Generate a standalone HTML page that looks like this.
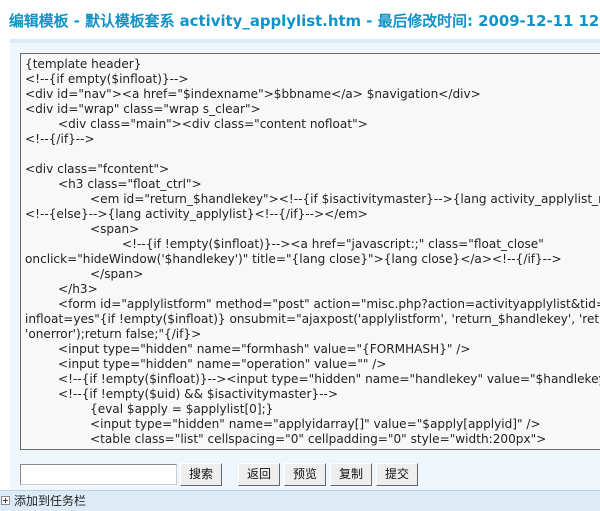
<!DOCTYPE html><html><head><meta charset="utf-8"><style>
*{margin:0;padding:0;box-sizing:border-box}
body{width:600px;height:511px;overflow:hidden;background:#fff;font-family:"DejaVu Sans","WenQuanYi Zen Hei",sans-serif;position:relative}
h1{position:absolute;left:9px;top:10px;font-size:14.9px;font-weight:bold;color:#1293c8;white-space:nowrap;font-family:"DejaVu Sans","WenQuanYi Zen Hei",sans-serif}
.panel{position:absolute;left:10px;top:39px;width:600px;height:452px;background:#eff7fc;border-top:4px solid #dcebf6}
.ta{position:absolute;left:20px;top:53px;width:600px;height:397px;background:#f8f8f8;border:1px solid #6a6a6a;border-right:none;overflow:hidden;padding:3px 0 0 4px}
.ta div{font-size:12.1px;line-height:15px;height:15px;white-space:pre;color:#222}
.i1{padding-left:33px}.i2{padding-left:65px}.i3{padding-left:97px}
.inp{position:absolute;left:20px;top:464px;width:157px;height:21px;background:#fff;border:1px solid #888;border-right-color:#ccc;border-bottom-color:#ccc}
.btn{position:absolute;top:463px;width:42px;height:23px;background:#eee;border:1px solid;border-color:#fff #666 #666 #fff;font-size:12px;text-align:center;line-height:21px;color:#111}
.foot{position:absolute;left:0;top:490px;width:600px;height:21px;background:#dcebf6;border-top:1px solid #b8d2e6;font-size:12px;line-height:20px;padding-left:14px;color:#222}
.plus{position:absolute;left:1px;top:5px;width:9px;height:9px;border:1px solid #888;background:#fff}
.plus:before{content:"";position:absolute;left:1px;top:3px;width:5px;height:1px;background:#444}
.plus:after{content:"";position:absolute;left:3px;top:1px;width:1px;height:5px;background:#444}
</style></head><body>
<h1>编辑模板 - 默认模板套系 activity_applylist.htm - 最后修改时间: 2009-12-11 12:09</h1>
<div class="panel"></div>
<div class="ta">
<div>{template header}</div>
<div>&lt;!--{if empty($infloat)}--&gt;</div>
<div>&lt;div id="nav"&gt;&lt;a href="$indexname"&gt;$bbname&lt;/a&gt; $navigation&lt;/div&gt;</div>
<div>&lt;div id="wrap" class="wrap s_clear"&gt;</div>
<div class="i1">&lt;div class="main"&gt;&lt;div class="content nofloat"&gt;</div>
<div>&lt;!--{/if}--&gt;</div>
<div></div>
<div>&lt;div class="fcontent"&gt;</div>
<div class="i1">&lt;h3 class="float_ctrl"&gt;</div>
<div class="i2">&lt;em id="return_$handlekey"&gt;&lt;!--{if $isactivitymaster}--&gt;{lang activity_applylist_manage}</div>
<div>&lt;!--{else}--&gt;{lang activity_applylist}&lt;!--{/if}--&gt;&lt;/em&gt;</div>
<div class="i2">&lt;span&gt;</div>
<div class="i3">&lt;!--{if !empty($infloat)}--&gt;&lt;a href="javascript:;" class="float_close"</div>
<div>onclick="hideWindow('$handlekey')" title="{lang close}"&gt;{lang close}&lt;/a&gt;&lt;!--{/if}--&gt;</div>
<div class="i2">&lt;/span&gt;</div>
<div class="i1">&lt;/h3&gt;</div>
<div class="i1">&lt;form id="applylistform" method="post" action="misc.php?action=activityapplylist&amp;tid=$tid&amp;</div>
<div>infloat=yes"{if !empty($infloat)} onsubmit="ajaxpost('applylistform', 'return_$handlekey', 'return_$handlekey',</div>
<div>'onerror');return false;"{/if}&gt;</div>
<div class="i1">&lt;input type="hidden" name="formhash" value="{FORMHASH}" /&gt;</div>
<div class="i1">&lt;input type="hidden" name="operation" value="" /&gt;</div>
<div class="i1">&lt;!--{if !empty($infloat)}--&gt;&lt;input type="hidden" name="handlekey" value="$handlekey" /&gt;</div>
<div class="i1">&lt;!--{if !empty($uid) &amp;&amp; $isactivitymaster}--&gt;</div>
<div class="i2">{eval $apply = $applylist[0];}</div>
<div class="i2">&lt;input type="hidden" name="applyidarray[]" value="$apply[applyid]" /&gt;</div>
<div class="i2">&lt;table class="list" cellspacing="0" cellpadding="0" style="width:200px"&gt;</div>
</div>
<div class="inp"></div>
<div class="btn" style="left:180px">搜索</div>
<div class="btn" style="left:238px">返回</div>
<div class="btn" style="left:284px">预览</div>
<div class="btn" style="left:330px">复制</div>
<div class="btn" style="left:376px">提交</div>
<div class="foot"><span class="plus"></span>添加到任务栏</div>
</body></html>
